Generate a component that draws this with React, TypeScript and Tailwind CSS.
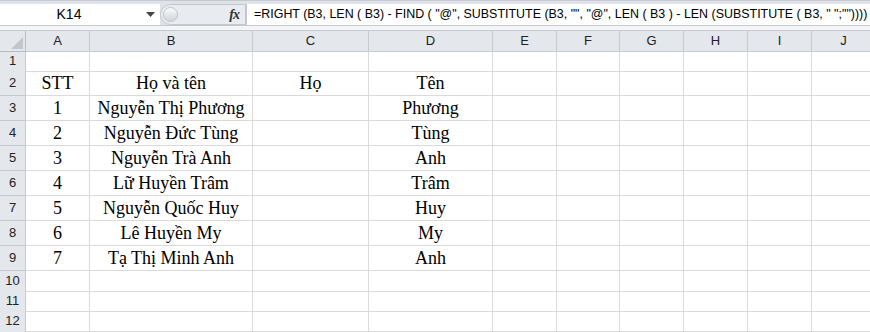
import React from 'react';

const cols = ['A', 'B', 'C', 'D', 'E', 'F', 'G', 'H', 'I', 'J'];

const rows: { n: number; label: string; h: string; cells: string[] }[] = [
  { n: 1, label: '1', h: 'h-[20px]', cells: ['', '', '', ''] },
  { n: 2, label: '2', h: 'h-[25px]', cells: ['STT', 'Họ và tên', 'Họ', 'Tên'] },
  { n: 3, label: '3', h: 'h-[25px]', cells: ['1', 'Nguyễn Thị Phương', '', 'Phương'] },
  { n: 4, label: '4', h: 'h-[25px]', cells: ['2', 'Nguyễn Đức Tùng', '', 'Tùng'] },
  { n: 5, label: '5', h: 'h-[25px]', cells: ['3', 'Nguyễn Trà Anh', '', 'Anh'] },
  { n: 6, label: '6', h: 'h-[25px]', cells: ['4', 'Lữ Huyền Trâm', '', 'Trâm'] },
  { n: 7, label: '7', h: 'h-[25px]', cells: ['5', 'Nguyễn Quốc Huy', '', 'Huy'] },
  { n: 8, label: '8', h: 'h-[25px]', cells: ['6', 'Lê Huyền My', '', 'My'] },
  { n: 9, label: '9', h: 'h-[25px]', cells: ['7', 'Tạ Thị Minh Anh', '', 'Anh'] },
  { n: 10, label: '10', h: 'h-[20px]', cells: ['', '', '', ''] },
  { n: 11, label: '11', h: 'h-[20px]', cells: ['', '', '', ''] },
  { n: 12, label: '12', h: 'h-[20px]', cells: ['', '', '', ''] },
  // only the top edge of row 13 shows in the window
  { n: 13, label: '', h: 'h-[20px]', cells: ['', '', '', ''] },
];

const gridCols = 'grid grid-cols-[26px_64px_163px_116px_124px_64px_63px_64px_64px_64px_64px]';

const formula =
  '=RIGHT (B3, LEN ( B3) - FIND ( "@", SUBSTITUTE (B3, "", "@", LEN ( B3 ) - LEN (SUBSTITUTE ( B3, " ";""))))';

export default function App() {
  return (
    <div className="w-[870px] h-[332px] overflow-hidden bg-white font-['Liberation_Sans',sans-serif]">
      {/* Formula bar */}
      <div className="bg-[#dfe3e8] pt-[3px] border-t border-[#c6cad0]">
        <div className="flex h-[21px]">
          <div className="w-[160px] bg-white flex items-center">
            <div className="flex-1 text-center text-[14px] text-black pr-[8px]">K14</div>
            <svg width="9" height="5" viewBox="0 0 9 5" className="mr-[5px]">
              <path d="M0 0 L9 0 L4.5 5 Z" fill="#444" />
            </svg>
          </div>
          <div className="w-[86px] flex items-center bg-[#e8ebef] rounded-l-full border border-[#c3c7cd]">
            <div className="w-[15px] h-[15px] rounded-full ml-[2px] bg-gradient-to-b from-[#fafbfc] to-[#d0d4da] border border-[#c0c4ca]" />
            <div className="flex-1" />
            <span className="font-['Liberation_Serif',serif] italic font-bold text-[14px] text-[#333] mr-[6px] tracking-[-1px]">
              fx
            </span>
          </div>
          <div className="flex-1 bg-white border-l border-[#c3c7cd] flex items-center pl-[7px] overflow-hidden">
            <span className="whitespace-nowrap text-[12.45px] text-black">{formula}</span>
          </div>
        </div>
        <div className="h-[6px] border-t border-[#b9bdc3] bg-[#f4f5f7] border-b border-[#c6cad0]" />
      </div>

      {/* Column header */}
      <div className={`${gridCols} h-[20px]`}>
        <div className="bg-[#e4e7eb] border-r border-b border-[#b8bcc2] relative">
          <svg width="12" height="12" viewBox="0 0 12 12" className="absolute right-[2px] bottom-[2px]">
            <path d="M12 0 L12 12 L0 12 Z" fill="#c3c7cc" />
          </svg>
        </div>
        {cols.map((c) => (
          <div
            key={c}
            className="bg-[#e4e7eb] border-r border-b border-[#c6c9ce] flex items-center justify-center text-[13px] text-[#222]"
          >
            {c}
          </div>
        ))}
      </div>

      {/* Body rows */}
      {rows.map((r) => (
        <div key={r.n} className={`${gridCols} ${r.h}`}>
          <div className="bg-[#e4e7eb] border-r border-b border-[#c6c9ce] flex items-center justify-center text-[13px] text-[#222]">
            {r.label}
          </div>
          {cols.map((c, i) => (
            <div
              key={c}
              className="border-r border-b border-[#dadada] flex items-end justify-center pb-[1px] font-['Liberation_Serif',serif] text-[18px] leading-[22px] text-black whitespace-nowrap"
            >
              {r.cells[i] ?? ''}
            </div>
          ))}
        </div>
      ))}
    </div>
  );
}
